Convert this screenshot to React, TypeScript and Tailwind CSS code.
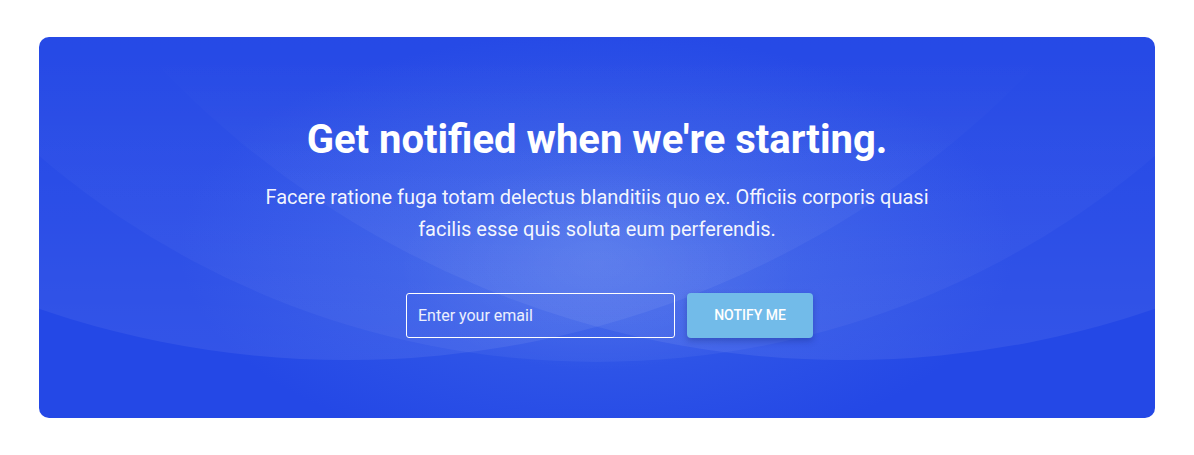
export default function App() {
  return (
    <div className="min-h-screen bg-white pt-[37px] px-[39px] font-['Roboto','Liberation_Sans',sans-serif]">
      <section className="relative overflow-hidden rounded-[10px] bg-[#2448e6]">
        {/* background shapes */}
        <div className="pointer-events-none absolute inset-0 bg-[radial-gradient(ellipse_50%_75%_at_50%_55%,rgba(80,125,235,0.5),rgba(80,125,235,0)_75%)]" />
        <div className="pointer-events-none absolute left-[-300px] top-[-1391px] h-[1716px] w-[1716px] rounded-full bg-linear-to-b from-white/0 from-76% to-white/[0.045]" />
        <div className="pointer-events-none absolute left-[-645px] top-[-1583px] h-[1906px] w-[1906px] rounded-full bg-linear-to-b from-white/0 from-84% to-white/[0.07]" />
        <div className="pointer-events-none absolute left-[-145px] top-[-1583px] h-[1906px] w-[1906px] rounded-full bg-linear-to-b from-white/0 from-84% to-white/[0.07]" />
        <div className="pointer-events-none absolute inset-0 bg-[radial-gradient(ellipse_18%_28%_at_50%_60%,rgba(255,255,255,0.07),rgba(255,255,255,0))]" />

        <div className="relative flex flex-col items-center pt-[79px] pb-[80px] text-center text-white">
          <h2 className="text-[40px] font-bold leading-[48px]">
            Get notified when we're starting.
          </h2>
          <p className="mt-[17px] max-w-[680px] text-[20px] leading-[32px] text-white/95">
            Facere ratione fuga totam delectus blanditiis quo ex. Officiis corporis quasi facilis esse quis soluta eum perferendis.
          </p>
          <form className="ml-[25px] mt-[48px] flex gap-3" onSubmit={(e) => e.preventDefault()}>
            <input
              type="email"
              placeholder="Enter your email"
              className="h-[45px] w-[269px] rounded-[3px] border border-white bg-transparent px-[11px] text-[16px] text-white outline-none placeholder:text-white/90"
            />
            <button
              type="submit"
              className="h-[45px] w-[126px] rounded-[4px] bg-[#72bbe9] text-[14px] font-medium uppercase text-white shadow-[0_3px_6px_rgba(20,40,120,0.35)]"
            >
              Notify me
            </button>
          </form>
        </div>
      </section>
    </div>
  );
}
